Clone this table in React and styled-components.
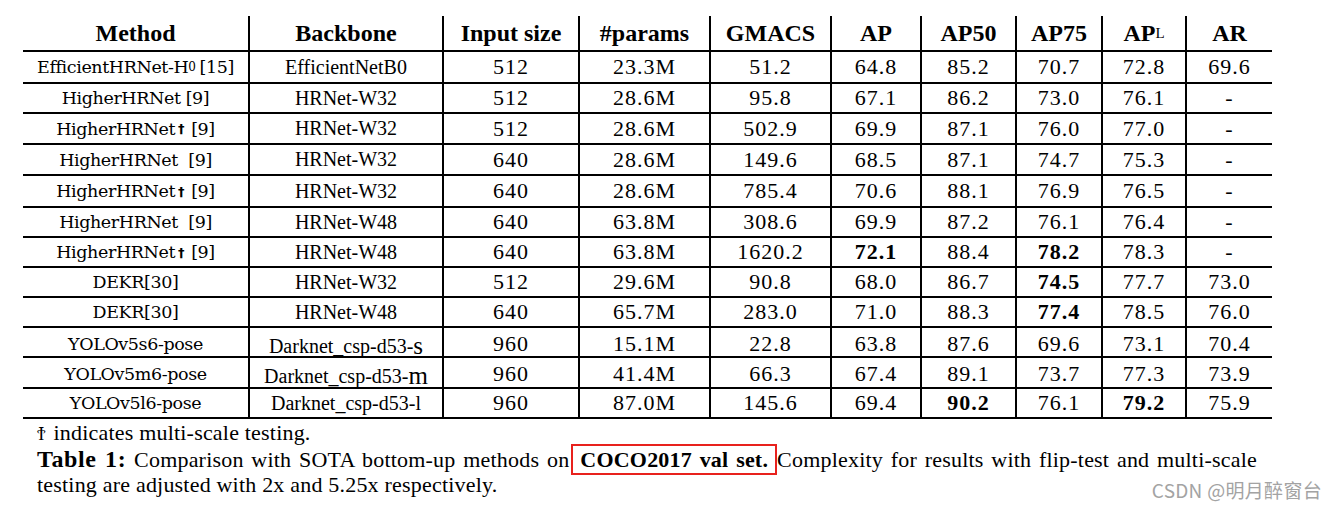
import React from "react";
import styled, { createGlobalStyle } from "styled-components";

const Global = createGlobalStyle`
  html, body { margin: 0; padding: 0; background: #fff; }
  body { width: 1338px; height: 506px; overflow: hidden; }
`;

const COLS = "227px 194px 136px 131px 121px 90px 95px 86px 84px 85px";

const Page = styled.div`
  position: relative;
  width: 1338px;
  height: 506px;
  padding: 16px 0 0 23px;
  box-sizing: border-box;
  background: #fff;
  color: #000;
`;

const Table = styled.div`
  display: flex;
  flex-direction: column;
  width: 1249px;
`;

const Row = styled.div`
  display: grid;
  grid-template-columns: ${COLS};
  height: ${(p) => p.$h}px;
  box-sizing: border-box;
  border-bottom: 2px solid #000;
`;

const Cell = styled.div`
  display: flex;
  align-items: center;
  justify-content: center;
  box-sizing: border-box;
  border-right: ${(p) => (p.$last ? "none" : "2px solid #000")};
  white-space: nowrap;
  font-family: ${(p) =>
    p.$kind === "method"
      ? '"DejaVu Serif", "Liberation Serif", serif'
      : '"Liberation Serif", "Times New Roman", serif'};
  font-size: ${(p) =>
    p.$kind === "head" ? 24 : p.$kind === "method" ? 17.5 : p.$kind === "backbone" ? 20 : 22}px;
  font-weight: ${(p) => (p.$kind === "head" || p.$bold ? 700 : 400)};
  letter-spacing: ${(p) =>
    p.$kind === "num" ? "1px" : p.$kind === "method" ? "-0.4px" : "0"};
  padding-top: ${(p) => (p.$low ? 4 : 0)}px;
`;

const Sup = styled.sup`
  font-size: 15px;
  font-weight: 400;
  vertical-align: 10px;
  line-height: 0;
`;

const Sub = styled.sub`
  font-size: 12px;
  vertical-align: -1px;
  line-height: 0;
  margin-right: 4px;
`;

const Dagger = styled.span`
  font-family: "DejaVu Sans", sans-serif;
  font-size: 13px;
  font-weight: 700;
  vertical-align: 3px;
  margin: 0 7px 0 3px;
`;

const BigLetter = styled.span`
  font-size: 25px;
`;

const Caption = styled.div`
  display: flex;
  flex-direction: column;
  width: 1220px;
  margin-left: 14px;
  margin-top: 1px;
  font-family: "Liberation Serif", "Times New Roman", serif;
  font-size: 22px;
  letter-spacing: 0.2px;
`;

const Footnote = styled.div`
  line-height: 26px;
  height: 26px;
  white-space: nowrap;
`;

const Coptic = styled.span`
  font-family: "DejaVu Serif", serif;
  font-size: 18px;
  margin-right: 2px;
`;

const TitleLine = styled.div`
  line-height: 26px;
  height: 26px;
  text-align: justify;
  text-align-last: justify;
  white-space: nowrap;
`;

const Label = styled.b`
  font-size: 24px;
  letter-spacing: 0.6px;
`;

const Boxed = styled.b`
  border: 2px solid #e8211d;
  padding: 1px 7px 1px 7px;
  margin-left: 2px;
`;

const LastLine = styled.div`
  line-height: 26px;
  height: 26px;
  white-space: nowrap;
`;

const Watermark = styled.div`
  position: absolute;
  right: 16px;
  top: 480px;
  font-family: "Noto Sans CJK SC", "DejaVu Sans", sans-serif;
  font-size: 19px;
  line-height: 19px;
  letter-spacing: 0.3px;
  color: #a3a3a3;
  white-space: nowrap;
`;

const HEADERS = [
  "Method",
  "Backbone",
  "Input size",
  "#params",
  "GMACS",
  "AP",
  "AP50",
  "AP75",
  "APL",
  "AR",
];

const D = "†";

const ROWS = [
  { h: 32, m: ["EfficientHRNet-H", "sub0", " [15]"], b: "EfficientNetB0", v: ["512", "23.3M", "51.2", "64.8", "85.2", "70.7", "72.8", "69.6"] },
  { h: 30, m: ["HigherHRNet [9]"], b: "HRNet-W32", v: ["512", "28.6M", "95.8", "67.1", "86.2", "73.0", "76.1", "-"] },
  { h: 31, m: ["HigherHRNet", "dag", "[9]"], b: "HRNet-W32", v: ["512", "28.6M", "502.9", "69.9", "87.1", "76.0", "77.0", "-"] },
  { h: 31, m: ["HigherHRNet\u00a0 [9]"], b: "HRNet-W32", v: ["640", "28.6M", "149.6", "68.5", "87.1", "74.7", "75.3", "-"] },
  { h: 32, m: ["HigherHRNet", "dag", "[9]"], b: "HRNet-W32", v: ["640", "28.6M", "785.4", "70.6", "88.1", "76.9", "76.5", "-"] },
  { h: 30, m: ["HigherHRNet\u00a0 [9]"], b: "HRNet-W48", v: ["640", "63.8M", "308.6", "69.9", "87.2", "76.1", "76.4", "-"] },
  { h: 30, m: ["HigherHRNet", "dag", "[9]"], b: "HRNet-W48", v: ["640", "63.8M", "1620.2", "*72.1", "88.4", "*78.2", "78.3", "-"] },
  { h: 30, m: ["DEKR[30]"], b: "HRNet-W32", v: ["512", "29.6M", "90.8", "68.0", "86.7", "*74.5", "77.7", "73.0"] },
  { h: 30, m: ["DEKR[30]"], b: "HRNet-W48", v: ["640", "65.7M", "283.0", "71.0", "88.3", "*77.4", "78.5", "76.0"] },
  { h: 30, m: ["YOLOv5s6-pose"], b: "Darknet_csp-d53-", last: "s", low: true, v: ["960", "15.1M", "22.8", "63.8", "87.6", "69.6", "73.1", "70.4"] },
  { h: 31, m: ["YOLOv5m6-pose"], b: "Darknet_csp-d53-", last: "m", low: true, v: ["960", "41.4M", "66.3", "67.4", "89.1", "73.7", "77.3", "73.9"] },
  { h: 30, m: ["YOLOv5l6-pose"], b: "Darknet_csp-d53-l", v: ["960", "87.0M", "145.6", "69.4", "*90.2", "76.1", "*79.2", "75.9"] },
];

function MethodText({ parts }) {
  return parts.map((p, i) => {
    if (p === "sub0") return <Sub key={i}>0</Sub>;
    if (p === "dag") return <Dagger key={i}>{D}</Dagger>;
    return <React.Fragment key={i}>{p}</React.Fragment>;
  });
}

export default function App() {
  return (
    <Page>
      <Global />
      <Table>
        <Row $h={36}>
          {HEADERS.map((h, i) => (
            <Cell key={h} $kind="head" $last={i === HEADERS.length - 1}>
              {h === "APL" ? (
                <>
                  AP<Sup>L</Sup>
                </>
              ) : (
                h
              )}
            </Cell>
          ))}
        </Row>
        {ROWS.map((r, ri) => (
          <Row key={ri} $h={r.h}>
            <Cell $kind="method">
              <MethodText parts={r.m} />
            </Cell>
            <Cell $kind="backbone" $low={r.low}>
              {r.b}
              {r.last && <BigLetter>{r.last}</BigLetter>}
            </Cell>
            {r.v.map((v, vi) => {
              const bold = v.startsWith("*");
              return (
                <Cell key={vi} $kind="num" $bold={bold} $last={vi === r.v.length - 1}>
                  {bold ? v.slice(1) : v}
                </Cell>
              );
            })}
          </Row>
        ))}
      </Table>
      <Caption>
        <Footnote>
          <Coptic>Ϯ</Coptic> indicates multi-scale testing.
        </Footnote>
        <TitleLine>
          <Label>Table 1:</Label> Comparison with SOTA bottom-up methods on<Boxed>COCO2017 val set.</Boxed>Complexity for results with flip-test and multi-scale
        </TitleLine>
        <LastLine>testing are adjusted with 2x and 5.25x respectively.</LastLine>
      </Caption>
      <Watermark>CSDN @明月醉窗台</Watermark>
    </Page>
  );
}
